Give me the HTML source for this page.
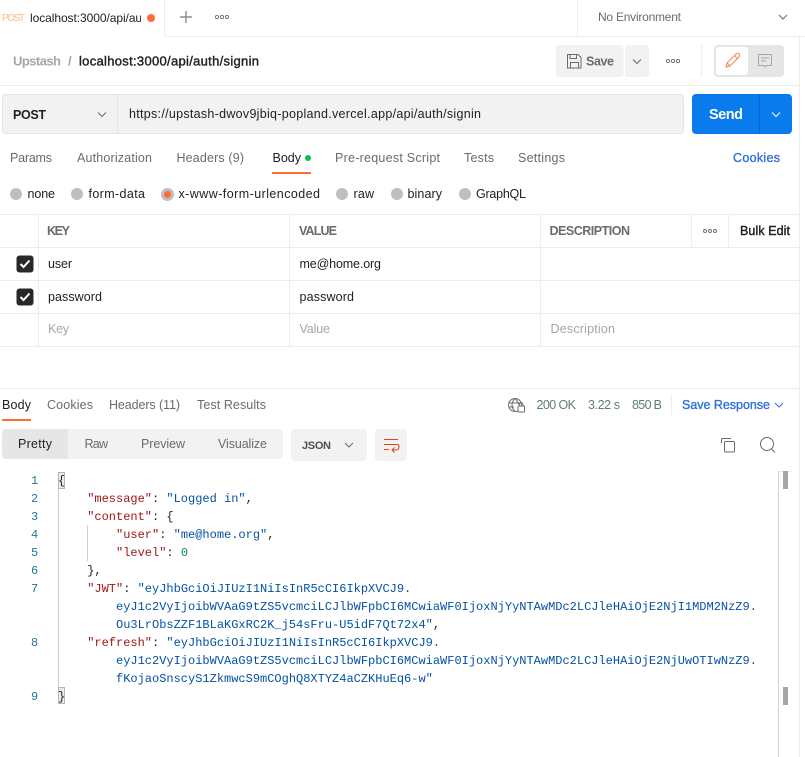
<!DOCTYPE html>
<html><head><meta charset="utf-8"><style>
html,body{margin:0;padding:0;background:#fff;width:805px;height:757px;overflow:hidden}
svg{display:block}
text{font-family:"Liberation Sans",sans-serif;font-size:12.5px;fill:#6b6b6b;white-space:pre}
.d{fill:#212121}.g{fill:#6b6b6b}.p{fill:#a6a6a6}
.m{stroke:currentColor;stroke-width:.4px}
.b{fill:#2f6fdc;stroke:#2f6fdc;stroke-width:.35px}
.h{font-weight:bold;font-size:12.5px}
.c{font-family:"Liberation Mono",monospace;font-size:12px;fill:#212121}
.n{font-family:"Liberation Mono",monospace;font-size:12px;fill:#237893}
.k{fill:#a31515}.s{fill:#0451a5}.v{fill:#098658}
.l{stroke:#ededed;stroke-width:1;fill:none}
.i{fill:none;stroke:#6b6b6b;stroke-width:1}
</style></head><body>
<svg width="805" height="757" viewBox="0 0 805 757" xmlns="http://www.w3.org/2000/svg">
<defs><clipPath id="tc"><rect x="0" y="0" width="141" height="36"/></clipPath></defs>

<!-- top tab bar -->
<path class="l" d="M164.5 0V36M165 36.5H805M577.5 0V36"/>
<text x="2" y="21" style="font-size:10px;fill:#f7bd85" textLength="23">POST</text>
<g clip-path="url(#tc)"><text x="30" y="22" class="d" style="font-size:12px" textLength="122">localhost:3000/api/auth</text></g>
<circle cx="151" cy="18" r="4" fill="#ff6c37"/>
<path d="M186 11V23M180 17H192" stroke="#8c8c8c" stroke-width="1.4" fill="none"/>
<g class="i" style="stroke-width:.9"><circle cx="217" cy="17" r="1.6"/><circle cx="222" cy="17" r="1.6"/><circle cx="227" cy="17" r="1.6"/></g>
<text x="598" y="21" style="font-size:12px" textLength="83">No Environment</text>
<path class="i" d="M779 15l4 4 4-4"/>

<!-- breadcrumb -->
<text x="13" y="65.5" class="m" style="fill:#a6a6a6;color:#a6a6a6;font-size:13px;font-weight:bold;stroke-width:0" textLength="48">Upstash</text>
<text x="68" y="65.5" style="fill:#a6a6a6;font-size:13px;font-weight:bold">/</text>
<text x="79" y="65.5" class="d m" style="color:#212121;font-size:13px" textLength="180">localhost:3000/api/auth/signin</text>
<path class="l" d="M0 85.5H800M799.5 36V757"/>

<!-- save group -->
<rect x="556" y="45" width="67.5" height="32" rx="3" fill="#f2f2f2"/>
<rect x="625" y="45" width="24" height="32" rx="3" fill="#f2f2f2"/>
<path class="i" d="M567.5 54.5h10.5l3 3v10.5h-13.5zM570 54.5v4h6.5v-4M570.5 68v-5.500h8V68"/>
<text x="586" y="65.5" style="font-size:12.5px;font-weight:bold" textLength="28">Save</text>
<path class="i" d="M633 59.5l4 4 4-4"/>
<g class="i" style="stroke-width:.9"><circle cx="668" cy="61" r="1.6"/><circle cx="673" cy="61" r="1.6"/><circle cx="678" cy="61" r="1.6"/></g>
<path class="l" d="M701.5 45V77"/>
<rect x="714" y="45" width="70" height="32" rx="4" fill="#e6e6e6"/>
<rect x="716" y="47" width="32" height="28" rx="3" fill="#fff"/>
<path d="M726 67l1-4 9-9c1-1 2.3-1 3 0s1 2 0 3l-9 9zM727 63l3 3M734.5 55.5l3 3" fill="none" stroke="#f58a5e" stroke-width="1.1"/>
<path d="M758.5 54.5h13v11h-5l-1.5 1.5-1.5-1.5h-5zM761 58h8M761 61h5" fill="none" stroke="#a6a6a6" stroke-width="1"/>

<!-- url row -->
<rect x="2.5" y="94.5" width="681" height="39" rx="3" fill="#f2f2f2" stroke="#e6e6e6"/>
<path d="M117.5 95V133" stroke="#e6e6e6"/>
<text x="13" y="119" class="d" style="font-weight:bold;font-size:12.5px" textLength="33">POST</text>
<path class="i" d="M98 112.5l4 4 4-4"/>
<text x="129" y="118" class="d" style="font-size:12.5px" textLength="352">https://upstash-dwov9jbiq-popland.vercel.app/api/auth/signin</text>
<rect x="692" y="94" width="100" height="40" rx="4" fill="#097bed"/>
<path d="M759.5 94V134" stroke="#0265d2"/>
<text x="709" y="119" style="fill:#fff;font-weight:bold;font-size:14.5px" textLength="34">Send</text>
<path d="M772 112.5l4 4 4-4" fill="none" stroke="#fff"/>

<!-- request tabs -->
<text x="10" y="162" textLength="42">Params</text>
<text x="77" y="162" textLength="75">Authorization</text>
<text x="176.5" y="162" textLength="67.5">Headers (9)</text>
<text x="272.5" y="162" class="d" textLength="28.5">Body</text>
<circle cx="308" cy="158" r="3" fill="#0cbb52"/>
<text x="335" y="162" textLength="105">Pre-request Script</text>
<text x="464" y="162" textLength="30">Tests</text>
<text x="518" y="162" textLength="47">Settings</text>
<text x="733" y="162" class="b" textLength="47">Cookies</text>
<rect x="272" y="172" width="39" height="2" fill="#ff6c37"/>

<!-- radios -->
<g fill="#bfbfbf"><circle cx="16" cy="194" r="6"/><circle cx="77" cy="194" r="6"/><circle cx="167.5" cy="194.5" r="6.5"/><circle cx="342" cy="194" r="6"/><circle cx="397" cy="194" r="6"/><circle cx="465" cy="194" r="6"/></g>
<circle cx="167.5" cy="194.5" r="3.5" fill="#ff6c37"/>
<text x="27.5" y="198" class="d" textLength="27.5">none</text>
<text x="88.5" y="198" class="d" textLength="56.5">form-data</text>
<text x="178.5" y="198" class="d" textLength="141.5">x-www-form-urlencoded</text>
<text x="353.5" y="198" class="d" textLength="20.5">raw</text>
<text x="407.5" y="198" class="d" textLength="34.5">binary</text>
<text x="476" y="198" class="d" textLength="50">GraphQL</text>

<!-- table -->
<path class="l" d="M0 214.5H800M0 247.5H800M0 280.5H800M0 313.5H800M0 346.5H800M38.5 214V347M289.5 214V347M540.5 214V347M691.5 214V247M728.5 214V247"/>
<text x="47" y="235" class="h" textLength="23">KEY</text>
<text x="299" y="235" class="h" textLength="38">VALUE</text>
<text x="549.5" y="235" class="h" textLength="80.5">DESCRIPTION</text>
<g class="i" style="stroke-width:.9"><circle cx="705" cy="231" r="1.5"/><circle cx="710" cy="231" r="1.5"/><circle cx="715" cy="231" r="1.5"/></g>
<text x="740" y="235" class="d m" style="color:#212121" textLength="50">Bulk Edit</text>
<rect x="16.5" y="255.5" width="17" height="17" rx="3" fill="#282828"/>
<path d="M20.5 264l3 3 6-6.5" fill="none" stroke="#fff" stroke-width="2"/>
<rect x="16.5" y="288.5" width="17" height="17" rx="3" fill="#282828"/>
<path d="M20.5 297l3 3 6-6.5" fill="none" stroke="#fff" stroke-width="2"/>
<text x="48" y="268" class="d" textLength="24">user</text>
<text x="299.5" y="268" class="d" textLength="81.5">me@home.org</text>
<text x="48" y="301" class="d" textLength="54">password</text>
<text x="299.5" y="301" class="d" textLength="54.5">password</text>
<text x="48" y="333" class="p" textLength="21">Key</text>
<text x="299.5" y="333" class="p" textLength="30.5">Value</text>
<text x="550.5" y="333" class="p" textLength="64.5">Description</text>

<!-- response header -->
<path class="l" d="M0 388.5H800"/>
<text x="2" y="409" class="d" textLength="29">Body</text>
<text x="47" y="409" textLength="46">Cookies</text>
<text x="109" y="409" textLength="71">Headers (11)</text>
<text x="197" y="409" textLength="69">Test Results</text>
<rect x="2" y="419" width="29" height="2" fill="#ff6c37"/>
<circle cx="515" cy="405" r="6.5" class="i"/>
<path class="i" d="M508.5 403H521M508.5 407H514M515 398.5c-4 4-4 9 0 13M515 398.5c2.5 2.5 3.5 4.5 3.5 6"/>
<rect x="518" y="406" width="6.5" height="6" rx=".5" fill="#fff" stroke="#6b6b6b"/>
<path class="i" d="M519.5 406v-1.5a1.7 1.7 0 0 1 3.5 0V406"/>
<text x="536.5" y="409" style="font-size:12.5px;fill:#5f7f6a" textLength="39.5">200 OK</text>
<text x="588" y="409" style="font-size:12.5px;fill:#5f7f6a" textLength="32">3.22 s</text>
<text x="632" y="409" style="font-size:12.5px;fill:#5f7f6a" textLength="30">850 B</text>
<path class="l" d="M671.5 395V415"/>
<text x="682" y="409" class="b" textLength="88">Save Response</text>
<path d="M775 403l4 4 4-4" fill="none" stroke="#2f6fdc"/>

<!-- view controls -->
<rect x="2" y="429" width="281" height="30" rx="4" fill="#f2f2f2"/>
<path d="M6 429H68V459H6a4 4 0 0 1-4-4V433a4 4 0 0 1 4-4z" fill="#e6e6e6"/>
<text x="18" y="448" class="d" textLength="34">Pretty</text>
<text x="84.5" y="448" textLength="23.5">Raw</text>
<text x="141" y="448" textLength="44">Preview</text>
<text x="218" y="448" textLength="49">Visualize</text>
<rect x="291" y="429" width="76" height="32" rx="4" fill="#f2f2f2"/>
<text x="302" y="449" style="font-weight:bold;font-size:11px;fill:#505050" textLength="29">JSON</text>
<path class="i" d="M345 443l4 4 4-4"/>
<rect x="375" y="429" width="32" height="32" rx="4" fill="#f2f2f2"/>
<path d="M384 439.5H398M384 444.5H398M384 449.5H389M398 444.5c1.5 1 1.5 5-1.500 5.500h-4M394.500 447.500l-2.500 2.500 2.500 2.500" fill="none" stroke="#e0481b" stroke-width="1.1"/>
<path class="i" d="M721.5 443V439.5a1 1 0 0 1 1-1H731"/>
<rect x="724.5" y="441.5" width="10" height="10.500" rx="1" class="i"/>
<circle cx="767" cy="444" r="6.5" class="i"/>
<path class="i" d="M771.500 449l3.500 3.500"/>

<!-- code editor -->
<text class="n" x="31" y="484">1</text><text class="n" x="31" y="502">2</text><text class="n" x="31" y="520">3</text><text class="n" x="31" y="538">4</text><text class="n" x="31" y="556">5</text><text class="n" x="31" y="574">6</text><text class="n" x="31" y="592">7</text><text class="n" x="31" y="646">8</text><text class="n" x="31" y="700">9</text>
<rect x="58.5" y="472.5" width="6" height="16" fill="#ececec" stroke="#b5b5b5"/>
<rect x="58.5" y="687.5" width="6" height="16" fill="#ececec" stroke="#b5b5b5"/>
<path d="M58.5 489V687" stroke="#c8c8c8"/>
<path d="M87.5 525V561" stroke="#d0d0d0"/>
<text class="c" x="58" y="484">{</text>
<text class="c" x="87.2" y="502"><tspan class="k">"message"</tspan>: <tspan class="s">"Logged in"</tspan>,</text>
<text class="c" x="87.2" y="520"><tspan class="k">"content"</tspan>: {</text>
<text class="c" x="116" y="538"><tspan class="k">"user"</tspan>: <tspan class="s">"me@home.org"</tspan>,</text>
<text class="c" x="116" y="556"><tspan class="k">"level"</tspan>: <tspan class="v">0</tspan></text>
<text class="c" x="87.2" y="574">},</text>
<text class="c" x="87.2" y="592"><tspan class="k">"JWT"</tspan>: <tspan class="s">"eyJhbGciOiJIUzI1NiIsInR5cCI6IkpXVCJ9.</tspan></text>
<text class="c s" x="116" y="610">eyJ1c2VyIjoibWVAaG9tZS5vcmciLCJlbWFpbCI6MCwiaWF0IjoxNjYyNTAwMDc2LCJleHAiOjE2NjI1MDM2NzZ9.</text>
<text class="c" x="116" y="628"><tspan class="s">Ou3LrObsZZF1BLaKGxRC2K_j54sFru-U5idF7Qt72x4"</tspan>,</text>
<text class="c" x="87.2" y="646"><tspan class="k">"refresh"</tspan>: <tspan class="s">"eyJhbGciOiJIUzI1NiIsInR5cCI6IkpXVCJ9.</tspan></text>
<text class="c s" x="116" y="664">eyJ1c2VyIjoibWVAaG9tZS5vcmciLCJlbWFpbCI6MCwiaWF0IjoxNjYyNTAwMDc2LCJleHAiOjE2NjUwOTIwNzZ9.</text>
<text class="c s" x="116" y="682">fKojaoSnscyS1ZkmwcS9mCOghQ8XTYZ4aCZKHuEq6-w"</text>
<text class="c" x="58" y="700">}</text>

<!-- scrollbar -->
<path d="M778.5 471V757" stroke="#d0d0d0"/>
<path d="M779 471.5H792" stroke="#ededed"/>
<rect x="783" y="471" width="5" height="18" fill="#a6a6a6"/>
<rect x="783" y="687" width="5" height="18" fill="#a6a6a6"/>
</svg>
</body></html>
